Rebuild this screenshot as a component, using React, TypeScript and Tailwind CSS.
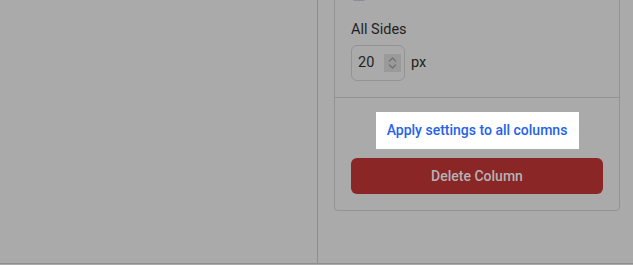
import React from 'react';

function Spinner() {
  return (
    <div className="flex h-[18px] w-[17px] flex-col items-center justify-center bg-[#9a9a9a]">
      <svg width="9" height="14" viewBox="0 0 9 14" fill="none" stroke="#6f6f6f" strokeWidth="1.2" strokeLinecap="round" strokeLinejoin="round">
        <path d="M1.5 5 L4.5 2 L7.5 5" />
        <path d="M1.5 9 L4.5 12 L7.5 9" />
      </svg>
    </div>
  );
}

export default function App() {
  return (
    <div
      className="flex h-[265px] w-[633px] flex-col overflow-hidden bg-[#aaaaaa]"
      style={{ fontFamily: 'Roboto, "Liberation Sans", sans-serif' }}
    >
      <div className="flex h-[264px] border-b border-[#8e8e8e]">
        {/* Canvas area */}
        <div className="w-[318px] shrink-0 border-r border-[#8e8e8e]" />

        {/* Settings sidebar */}
        <div className="flex-1 overflow-hidden pl-4 pr-[13px]">
          <div className="-mt-[30px] rounded-b border border-[#939393]">
            {/* Padding section */}
            <div className="flex flex-col px-4 pt-[16px] pb-4">
              <div className="flex items-center gap-2">
                <div className="ml-[1px] h-[14px] w-[14px] rounded-[3px] border border-[#8d8c98] bg-[#9e9da8]" />
              </div>
              <div className="mt-[19px] text-[14.5px] leading-5 text-[#1f1f1f]">All Sides</div>
              <div className="mt-[5px] flex items-center gap-[6px]">
                <div className="flex h-[36px] w-[54px] items-center justify-between rounded-md border border-[#939393] pl-[6px] pr-[3px]">
                  <span className="text-[14.5px] text-[#1f1f1f]">20</span>
                  <Spinner />
                </div>
                <span className="text-[14.5px] text-[#1f1f1f]">px</span>
              </div>
            </div>

            {/* Actions */}
            <div className="flex flex-col items-center border-t border-[#939393] px-4 pt-[14px] pb-4">
              <button className="flex h-[37px] w-[203px] items-center justify-center bg-white text-[14px] font-medium text-[#2563eb]">
                Apply settings to all columns
              </button>
              <button className="mt-[9px] flex h-[36px] w-full items-center justify-center rounded-md bg-[#8b2626] text-[14px] font-medium text-[#b4b4b4]">
                Delete Column
              </button>
            </div>
          </div>
        </div>
      </div>
    </div>
  );
}
